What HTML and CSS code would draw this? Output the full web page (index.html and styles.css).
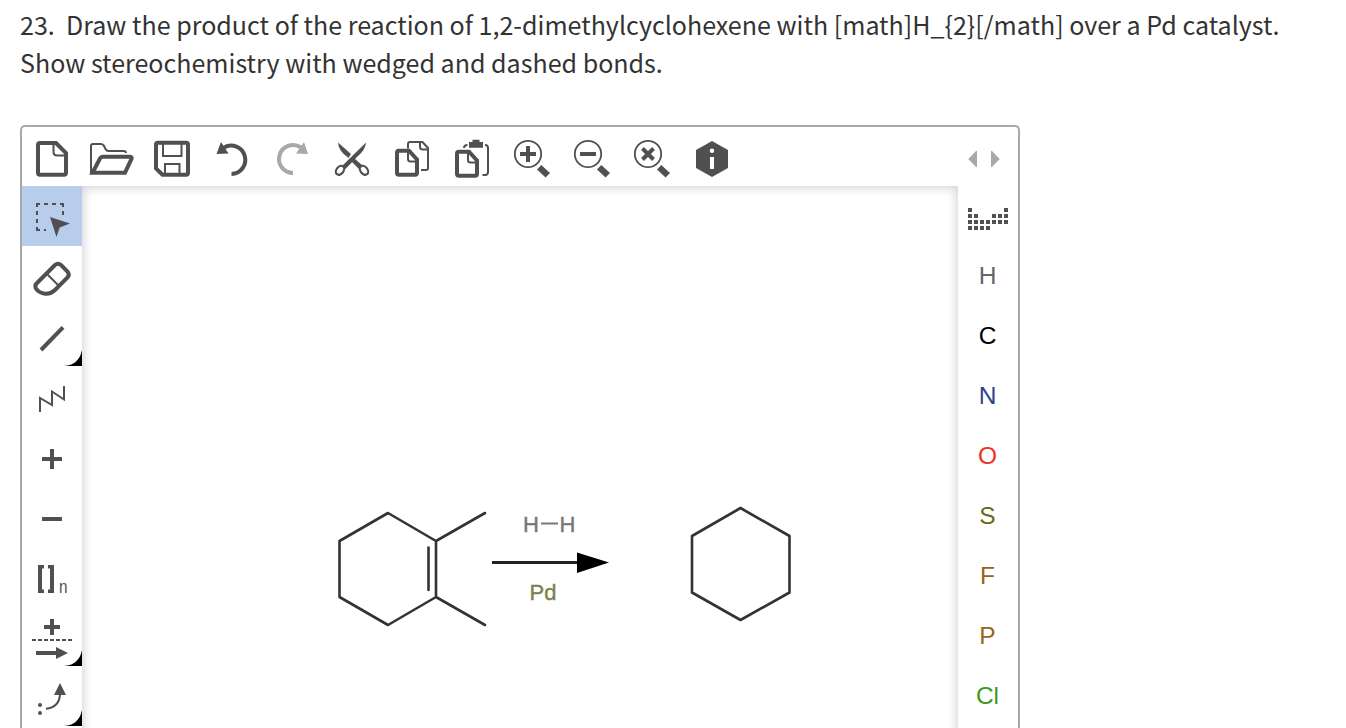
FILE: index.html
```html
<!DOCTYPE html>
<html lang="en">
<head>
  <meta charset="utf-8">
  <title>Question 23</title>
  <link rel="stylesheet" href="styles.css">
</head>
<body>
  <p class="question">23.&nbsp; Draw the product of the reaction of 1,2-dimethylcyclohexene with [math]H_{2}[/math] over a Pd catalyst.<br>Show stereochemistry with wedged and dashed bonds.</p>
  <div class="editor">
    <!-- Top toolbar -->
    <div class="toolbar">
      <svg class="tool" viewBox="0 1 60 59"><!-- New -->
        <path class="thick" d="M18 17H34L44 27V46.700q0 2-2 2H18q-2 0-2-2V19q0-2 2-2z"/>
        <path class="thin" d="M31.500 17v9q0 3.500 4 3.500h9"/>
      </svg>
      <svg class="tool" viewBox="0 1 60 59"><!-- Open -->
        <path class="thin" d="M9 48V20q0-2 2-2h8q2 0 3 2l1.500 3q1 2 3 2h15q2.500 0 2.500 2"/>
        <path class="thick" d="M10.500 46.700L18 32.500q1-1.700 2.500-1.700H47.500q3 0 2 2L43 46.700z"/>
      </svg>
      <svg class="tool" viewBox="0 1 60 59"><!-- Save -->
        <path class="thick" d="M16 16.700H44q2 0 2 2V46.700q0 2-2 2H20.500L14 42.500V18.700q0-2 2-2z"/>
        <path class="thin" d="M21 17v13h18.500V17M23 49V38h14.500v11"/>
      </svg>
      <svg class="tool" viewBox="0 1 60 59"><!-- Undo -->
        <path class="thick" d="M22 21.500A14.200 14.200 0 1 1 29.500 48"/>
        <path class="solid" d="M14.500 28L19 16l7.500 11.500z"/>
      </svg>
      <svg class="tool disabled" viewBox="0 1 60 59"><!-- Redo -->
        <path class="thick" d="M39 21.500A14 14 0 1 0 31 47"/>
        <path class="solid" d="M46 28L42 16l-8 11.500z"/>
      </svg>
      <svg class="tool" viewBox="0 1 60 59"><!-- Cut -->
        <path class="solid" d="M16 16.500L29 28l-2.500 4Q16.500 25 16 16.500zM44 16.500Q43.500 24 35 31L23.500 43 20 40zM32 32l8.500 7.500-3.500 3.500L28.500 34.500z"/>
        <ellipse class="ring" cx="18" cy="44.300" rx="3.500" ry="5" transform="rotate(38 18 44.300)"/>
        <ellipse class="ring" cx="42" cy="44.300" rx="3.500" ry="5" transform="rotate(-38 42 44.300)"/>
      </svg>
      <svg class="tool" viewBox="0 1 60 59"><!-- Copy -->
        <path class="thin" d="M26 22.500V18q0-2 2-2H40.500L46 22V42q0 2-2 2H39M38 16v5q0 2.500 3 2.500h5"/>
        <path class="thick" d="M17 24.700H27L35 33.500V46.700q0 2-2 2H17q-2 0-2-2v-20q0-2 2-2z"/>
        <path class="thin" d="M26 25v8q0 2.500 2.500 2.500H35"/>
      </svg>
      <svg class="tool" viewBox="0 1 60 59"><!-- Paste -->
        <path class="thin" d="M22 22q0-3 3.500-3M43 19q3 0 3 3v24q0 3-3 3h-2.500"/>
        <path class="solid" d="M27 16h3.500v-2.300h7V16H41v5.700H27z"/>
        <path class="thick" d="M17 25.700H27L35 34.500V47.700q0 2-2 2H17q-2 0-2-2v-20q0-2 2-2z"/>
        <path class="thin" d="M26 26v8q0 2.500 2.500 2.500H35"/>
      </svg>
      <svg class="tool" viewBox="0 1 60 59"><!-- Zoom in -->
        <circle class="lens" cx="26" cy="28" r="13.200"/>
        <path class="thick" d="M18 28h16M26 20v16"/>
        <path class="solid" d="M39.300 39L48 47l-4.500 4.500-8.500-8z"/>
      </svg>
      <svg class="tool" viewBox="0 1 60 59"><!-- Zoom out -->
        <circle class="lens" cx="26" cy="28" r="13.200"/>
        <path class="thick" d="M18 28h16"/>
        <path class="solid" d="M39.300 39L48 47l-4.500 4.500-8.500-8z"/>
      </svg>
      <svg class="tool" viewBox="0 1 60 59"><!-- Reset zoom -->
        <circle class="lens" cx="26" cy="28" r="13.200"/>
        <path class="thick" d="M20.500 22.500l11 11M31.500 22.500l-11 11"/>
        <path class="solid" d="M39.300 39L48 47l-4.500 4.500-8.500-8z"/>
      </svg>
      <svg class="tool" viewBox="0 1 60 59"><!-- About -->
        <path class="solid" d="M30 15l16 9v18l-16 9-16-9V24z"/>
        <circle class="paper" cx="30" cy="24.800" r="2.200"/>
        <path class="paper" d="M28 31h4v12h-4z"/>
      </svg>
      <svg class="tool pager disabled" viewBox="0 1 60 59"><!-- Previous / next -->
        <path class="solid" d="M10.300 33l7.700-8h1v16h-1zM41.700 33L34 25h-1v16h1z"/>
      </svg>
    </div>

    <div class="workspace">
      <!-- Drawing tools -->
      <div class="side">
        <svg class="tool selected" viewBox="0 0 60 60"><!-- Select -->
          <path class="thin" d="M14 18h4M22 18h4M30 18h4M38 18h4M15 17v4M15 25v4M15 33v4M15 41v4M14 44h4M22 44h2M41 17v4M41 25v4"/>
          <path class="solid" d="M28 31l20 6.500-10.300 4L34.500 51z"/>
        </svg>
        <svg class="tool" viewBox="0 0 60 60"><!-- Erase -->
          <path class="thick" d="M33 19q3-2.500 6 0l6.500 6.500q2.500 3 0 6L33 44q-4.500 4.500-11 3.500-5.500-1-8-5-1.500-3 .5-5z"/>
          <path class="thin" d="M25.500 28.500l11 11"/>
        </svg>
        <svg class="tool" viewBox="0 0 60 60"><!-- Bond -->
          <path class="thick" d="M41 21.300L19 44"/>
          <path class="more" d="M42 60q15-1 18-16v16z"/>
        </svg>
        <svg class="tool" viewBox="0 0 60 60"><!-- Chain -->
          <path class="thin" d="M18 46V32l12 7V25.500l12 8V20"/>
        </svg>
        <svg class="tool" viewBox="0 0 60 60"><!-- Charge plus -->
          <path class="thick" d="M20 33h20M30 23v20"/>
        </svg>
        <svg class="tool" viewBox="0 0 60 60"><!-- Charge minus -->
          <path class="thick" d="M20 33h20"/>
        </svg>
        <svg class="tool" viewBox="0 0 60 60"><!-- S-group -->
          <path class="solid" d="M16 19h6v3.500h-2v21h2V47h-6zM32 19h-6v3.500h2v21h-2V47h6z"/>
          <text class="sub" x="37" y="47" textLength="8.500" lengthAdjust="spacingAndGlyphs">n</text>
        </svg>
        <svg class="tool" viewBox="0 0 60 60"><!-- Reaction -->
          <path class="thick" d="M22 21h16M30 13v16M14 47h21"/>
          <path class="thin dashes" d="M10 34h40"/>
          <path class="solid" d="M34 41l12 6-12 6z"/>
          <path class="more" d="M42 60q15-1 18-16v16z"/>
        </svg>
        <svg class="tool" viewBox="0 0 60 60"><!-- Electron flow -->
          <path class="solid" d="M38 17l6 12H32z"/>
          <path class="thin" d="M24 42.700q13-1 14-14"/>
          <circle class="solid" cx="18" cy="39" r="2"/>
          <circle class="solid" cx="18" cy="47" r="2"/>
          <path class="more" d="M42 60q15-1 18-16v16z"/>
        </svg>
      </div>

      <!-- Reaction scheme -->
      <div class="canvas">
        <svg class="sketch" viewBox="82 186 876 542">
          <path class="bond" d="M388 513l48 28v56L388 625l-48.500-28V541zM436 541l49-28M436 597l49 28M428.500 547.500v42.500"/>
          <path class="bond" d="M740.500 508l49 28v56.500l-49 27.500-48.500-27.500V536z"/>
          <path class="arrow" d="M492 562.500h86"/>
          <path class="arrowhead" d="M577 552.500l32 10-32 10.500z"/>
          <path class="hbond" d="M541 523.500h17"/>
          <text class="atom hydrogen" x="523" y="532">H</text>
          <text class="atom hydrogen" x="559.500" y="532">H</text>
          <text class="atom palladium" x="529.500" y="600">Pd</text>
        </svg>
      </div>

      <!-- Elements -->
      <div class="side elements">
        <svg class="tool" viewBox="0 0 60 60"><!-- Periodic table -->
          <path class="solid" d="M10 22h4v4h-4zM46 22h4v4h-4zM10 28h4v4h-4zM16 28h4v4h-4zM34 28h4v4h-4zM40 28h4v4h-4zM46 28h4v4h-4zM10 34h4v4h-4zM16 34h4v4h-4zM22 34h4v4h-4zM28 34h4v4h-4zM34 34h4v4h-4zM40 34h4v4h-4zM46 34h4v4h-4zM10 40h4v4h-4zM16 40h4v4h-4zM22 40h4v4h-4zM28 40h4v4h-4z"/>
        </svg>
        <div class="element h">H</div>
        <div class="element c">C</div>
        <div class="element n">N</div>
        <div class="element o">O</div>
        <div class="element s">S</div>
        <div class="element f">F</div>
        <div class="element p">P</div>
        <div class="element cl">Cl</div>
      </div>
    </div>
  </div>
</body>
</html>
```

FILE: styles.css
```css
/*Page*/
body {
  margin: 0;
  background-color: white;
  font-family: "Liberation Sans", Arial, sans-serif;
}
/*Question text*/
.question {
  margin: 0;
  padding: 5px 20px 0;
  height: 125px;
  box-sizing: border-box;
  color: #333;
  font-family: "Noto Sans CJK SC", sans-serif;
  font-size: 25.06px;
  line-height: 38px;
  white-space: nowrap;
}
/*Editor frame, open at the bottom*/
.editor {
  margin-left: 20px;
  width: 1000px;
  height: 603px;
  box-sizing: border-box;
  border: 2px solid #a8a8a8;
  border-bottom: none;
  border-radius: 5px 5px 0 0;
}
.toolbar {
  display: flex;
  height: 59px;
}
.toolbar .tool {
  height: 59px;
}
.pager {
  margin-left: auto;
}
.workspace {
  display: flex;
  height: 542px;
  overflow: hidden;
}
.side {
  display: flex;
  flex-direction: column;
  width: 60px;
}
/*Icons*/
.tool {
  display: block;
  flex: none;
  width: 60px;
  height: 60px;
  color: #505050;
}
.selected {
  background-color: #b8ccec;
}
.disabled {
  color: #a8a8a8;
}
.thick {
  fill: none;
  stroke: currentColor;
  stroke-width: 4;
}
.thin {
  fill: none;
  stroke: currentColor;
  stroke-width: 2;
}
.lens {
  fill: none;
  stroke: currentColor;
  stroke-width: 1.8;
}
.ring {
  fill: none;
  stroke: currentColor;
  stroke-width: 2.2;
}
.solid {
  fill: currentColor;
}
.paper {
  fill: white;
}
.more {
  fill: black;
}
.dashes {
  stroke-dasharray: 4 2;
}
.sub {
  fill: currentColor;
  font-size: 18px;
}
/*Drawing area*/
.canvas {
  width: 876px;
  height: 560px;
  box-shadow: inset 0 0 10px 2px rgba(0, 0, 0, 0.17);
}
.sketch {
  display: block;
  width: 876px;
  height: 542px;
}
.bond {
  fill: none;
  stroke: #333;
  stroke-width: 2.6;
  stroke-linecap: round;
  stroke-linejoin: round;
}
.arrow {
  stroke: #222;
  stroke-width: 2.8;
}
.arrowhead {
  fill: black;
}
.hbond {
  stroke: #777;
  stroke-width: 2;
}
.atom {
  font-size: 22px;
  stroke-width: 0.4;
}
.hydrogen {
  fill: #777;
  stroke: #777;
}
.palladium {
  fill: #80804d;
  stroke: #80804d;
}
/*Element buttons*/
.element {
  height: 60px;
  padding-right: 1px;
  font-size: 24.5px;
  line-height: 60px;
  text-align: center;
}
.h { color: #666; }
.c { color: black; }
.n { color: #304090; }
.o { color: #ee3322; }
.s { color: #666a1a; }
.f { color: #94651a; }
.p { color: #94651a; }
.cl { color: #3a9a25; }
```
